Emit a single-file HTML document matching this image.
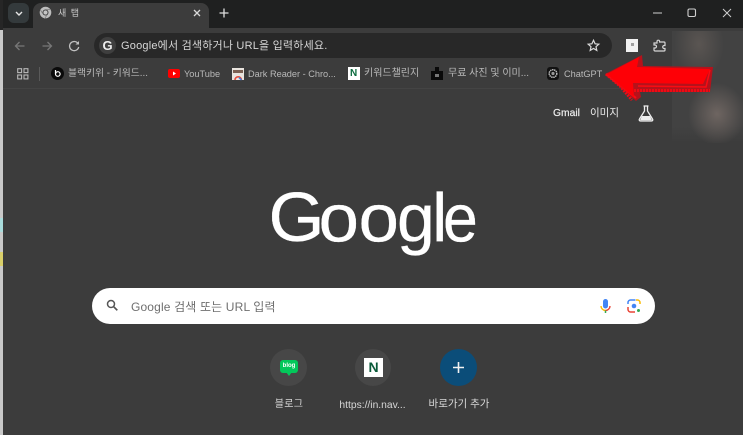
<!DOCTYPE html>
<html lang="ko"><head><meta charset="utf-8"><title>새 탭</title>
<style>
*{box-sizing:border-box}
html,body{margin:0;padding:0;width:743px;height:435px;overflow:hidden;background:#3b3b3b}
body{position:relative;font-family:"Liberation Sans","Noto Sans CJK KR",sans-serif}
.a{position:absolute;white-space:nowrap}
.bm{font-size:10px;color:#b9b9b9;top:68px;line-height:12px}
.lt{font-size:9.200px}
svg{position:absolute;overflow:visible}
</style></head><body>
<!-- frame -->
<div class="a" style="left:0;top:0;width:743px;height:28px;background:#1f2020"></div>
<div class="a" style="left:0;top:0;width:3px;height:435px;background:#c9c9c9"></div>
<div class="a" style="left:0;top:0;width:3px;height:30px;background:#262626"></div>
<div class="a" style="left:0;top:218px;width:3px;height:14px;background:#a9dcdc"></div>
<div class="a" style="left:0;top:252px;width:3px;height:14px;background:#d9cf6a"></div>
<div class="a" style="left:3px;top:28px;width:740px;height:407px;background:#3c3c3c;border-radius:6px 0 0 0"></div>
<!-- tab search button -->
<div class="a" style="left:8px;top:3px;width:21px;height:20px;background:#343a3c;border-radius:6px"></div>
<svg style="left:14px;top:9px" width="10" height="8"><path d="M2 3l3 3 3-3" fill="none" stroke="#e6e6e6" stroke-width="1.4"/></svg>
<!-- tab -->
<div class="a" style="left:33px;top:3px;width:176px;height:25px;background:#3c3c3c;border-radius:8px 8px 0 0"></div>
<svg style="left:39px;top:6px" width="13" height="13" viewBox="0 0 13 13"><circle cx="6.500" cy="6.500" r="5.800" fill="#bdbdbd"/><circle cx="6.500" cy="6.500" r="3" fill="#3c3c3c"/><circle cx="6.500" cy="6.500" r="2.100" fill="#c4c4c4"/><path d="M6.500 3.500h5.500M4 8l-2.500-4M8 9l-2.500 3.800" stroke="#7f7f7f" fill="none" stroke-width=".8"/></svg>
<div class="a" style="left:58px;top:7px;font-size:9px;line-height:13px;color:#c8c8c8;letter-spacing:1px">새 탭</div>
<svg style="left:193px;top:9px" width="8" height="8"><path d="M1 1l6 6M7 1l-6 6" stroke="#d8d8d8" stroke-width="1.300"/></svg>
<svg style="left:219px;top:8px" width="10" height="10"><path d="M5 .5v9M.5 5h9" stroke="#dedede" stroke-width="1.300"/></svg>
<!-- window controls -->
<svg style="left:653px;top:8px" width="10" height="10"><path d="M0 5h9" stroke="#cfcfcf"/></svg>
<svg style="left:687px;top:8px" width="10" height="10"><rect x="1" y="1" width="7.500" height="7.500" rx="1.500" fill="none" stroke="#cfcfcf" stroke-width="1.100"/></svg>
<svg style="left:722px;top:8px" width="10" height="10"><path d="M1 1l8 8M9 1l-8 8" stroke="#cfcfcf" stroke-width="1"/></svg>
<!-- nav -->
<svg style="left:14px;top:40px" width="12" height="12"><path d="M10.500 6H1.500M5.500 2L1.500 6l4 4" fill="none" stroke="#777" stroke-width="1.300"/></svg>
<svg style="left:41px;top:40px" width="12" height="12"><path d="M1.500 6h9M6.500 2l4 4-4 4" fill="none" stroke="#777" stroke-width="1.300"/></svg>
<svg style="left:68px;top:40px" width="12" height="12"><path d="M10 3.500A4.600 4.600 0 1 0 10.700 7" fill="none" stroke="#c0c0c0" stroke-width="1.300"/><path d="M7.500 4.500h3.500V1z" fill="#c0c0c0"/></svg>
<!-- omnibox -->
<div class="a" style="left:94px;top:33px;width:518px;height:25px;background:#282828;border-radius:13px"></div>
<div class="a" style="left:99px;top:37px;width:17px;height:17px;background:#3f3f3f;border-radius:50%"></div>
<div class="a" style="left:101px;top:38px;width:13px;font-size:13px;line-height:15px;font-weight:700;color:#eee;text-align:center">G</div>
<div class="a" style="left:121px;top:38.500px;font-size:11px;line-height:15px;color:#d6d6d6;letter-spacing:.2px">Google에서 검색하거나 URL을 입력하세요.</div>
<svg style="left:587px;top:39px" width="13" height="13" viewBox="0 0 13 13"><path d="M6.500 1.300l1.600 3.500 3.700.4-2.800 2.500.8 3.700-3.300-1.900-3.300 1.900.8-3.700L1.200 5.200l3.700-.4z" fill="none" stroke="#dcdcdc" stroke-width="1.200"/></svg>
<!-- extensions -->
<div class="a" style="left:626px;top:39px;width:12px;height:13px;background:#f2f2f2"></div>
<div class="a" style="left:631px;top:43px;width:3px;height:3px;background:#a0a0a0"></div>
<svg style="left:653px;top:39px" width="14" height="13" viewBox="0 0 14 13"><path d="M1 4h3V2.500a1.300 1.300 0 0 1 2.600 0V3.000h4.400a1 1 0 0 1 1 1v2.500h-.8a1.500 1.500 0 0 0 0 3h.8v1.500a1 1 0 0 1-1 1H2a1 1 0 0 1-1-1V9h1a1.500 1.500 0 0 0 0-3H1z" fill="none" stroke="#d6d6d6" stroke-width="1.200"/></svg>
<!-- bookmarks -->
<div class="a" style="left:3px;top:88px;width:670px;height:1px;background:#444"></div>
<svg style="left:17px;top:68px" width="12" height="12"><g fill="none" stroke="#b8b8b8" stroke-width="1.100"><rect x=".7" y=".7" width="3.900" height="3.900"/><rect x="7" y=".7" width="3.900" height="3.900"/><rect x=".7" y="7" width="3.900" height="3.900"/><rect x="7" y="7" width="3.900" height="3.900"/></g></svg>
<div class="a" style="left:39px;top:67px;width:1px;height:14px;background:#5a5a5a"></div>
<div class="a" style="left:51px;top:67px;width:13px;height:13px;background:#0a0a0a;border-radius:50%"></div>
<svg style="left:51px;top:67px" width="13" height="13"><circle cx="6.800" cy="7" r="2.300" fill="none" stroke="#fff" stroke-width="1.200"/><path d="M4.500 3v4" stroke="#fff" stroke-width="1.200"/></svg>
<div class="a bm" style="left:68px;font-size:9.800px">블랙키위 - 키워드...</div>
<div class="a" style="left:168px;top:69px;width:12px;height:9px;background:#f00;border-radius:2px"></div>
<svg style="left:168px;top:69px" width="12" height="9"><path d="M5 2.500v4l3-2z" fill="#fff"/></svg>
<div class="a bm lt" style="left:184px">YouTube</div>
<div class="a" style="left:232px;top:68px;width:12px;height:12px;background:#e9e4de"></div>
<svg style="left:232px;top:68px" width="12" height="12"><path d="M1 2h10v3H1z" fill="#7a5f52"/><path d="M3 12a3.200 3.200 0 0 1 6.400 0" fill="none" stroke="#e34b3c" stroke-width="1.600"/><path d="M7 9.500l2.500 2.500" stroke="#3b7de0" stroke-width="1.500"/></svg>
<div class="a bm lt" style="left:248px">Dark Reader - Chro...</div>
<div class="a" style="left:348px;top:67px;width:12px;height:13px;background:#fff"></div>
<div class="a" style="left:350px;top:68px;font-size:10px;line-height:11px;font-weight:700;color:#0b6b3e">N</div>
<div class="a bm" style="left:364px">키워드챌린지</div>
<div class="a" style="left:431px;top:71px;width:12px;height:9px;background:#0a0a0a"></div>
<div class="a" style="left:435px;top:67px;width:4px;height:4px;background:#0a0a0a"></div>
<div class="a" style="left:435px;top:74px;width:4px;height:3px;background:#777"></div>
<div class="a bm" style="left:448px">무료 사진 및 이미...</div>
<div class="a" style="left:547px;top:67px;width:12px;height:13px;background:#111;border-radius:3px"></div>
<svg style="left:547px;top:67px" width="12" height="13"><circle cx="6" cy="6.500" r="3.800" fill="none" stroke="#bbb" stroke-width="1.500" stroke-dasharray="1.500 .6"/><circle cx="6" cy="6.500" r="1.600" fill="#999"/></svg>
<div class="a bm lt" style="left:564px">ChatGPT</div>
<!-- blurred right side -->
<div class="a" style="left:672px;top:31px;width:71px;height:112px;background:linear-gradient(#424242 85%,#3c3c3c);overflow:hidden">
 <div class="a" style="left:2px;top:-22px;width:50px;height:70px;background:radial-gradient(closest-side,#5a5552,rgba(90,85,82,0))"></div>
 <div class="a" style="left:16px;top:52px;width:58px;height:62px;background:radial-gradient(closest-side,#6e6561,rgba(110,101,97,0))"></div>
</div>
<!-- arrow -->
<svg style="left:0;top:0" width="743" height="135">
 <path d="M605 74L642 55 643 66 713 67 710 92 640 92 641 97 636 101z" fill="#b5121b"/>
 <path d="M607 75L636 98" stroke="#fd0a12" stroke-width="2"/>
 <path d="M634 90.500L710 90.500" stroke="#f00a14" stroke-width="3" stroke-dasharray="2 1" fill="none"/>
 <path d="M606 74L620 86 632 100" stroke="#f00a14" stroke-width="3" stroke-dasharray="2 1" fill="none"/>
 <path d="M638 86L706 87 710 70" stroke="#fd0a12" stroke-width="1.500" fill="none"/>
 <path d="M607 74L639 57 637 67 710 69 703 84 633 83 634 97z" fill="#fe0006"/>
</svg>
<!-- top links -->
<div class="a" style="left:553px;top:107px;font-size:10.300px;line-height:14px;color:#ececec;-webkit-text-stroke:.2px #ececec">Gmail</div>
<div class="a" style="left:590px;top:106px;font-size:10.500px;line-height:14px;color:#ececec">이미지</div>
<svg style="left:638px;top:105px" width="16" height="17" viewBox="0 0 16 17"><path d="M5.500 1h5M6.500 1v5L1.500 14a1.200 1.200 0 0 0 1 2h11a1.200 1.200 0 0 0 1-2L9.500 6V1" fill="none" stroke="#eee" stroke-width="1.300"/><path d="M4 11h8l2 4.300H2z" fill="#eee"/></svg>
<!-- google logo -->
<svg style="left:0;top:0" width="743" height="435"><g font-family="Liberation Sans" fill="#fff" stroke="#fff" stroke-width=".3">
<text transform="translate(268.500 241) scale(1.030 1)" font-size="70">G</text>
<text transform="translate(318.500 241.500) scale(1.070 1)" font-size="68">o</text>
<text transform="translate(358.500 241.500) scale(1.070 1)" font-size="68">o</text>
<text transform="translate(397 241.500)" font-size="68">g</text>
<text transform="translate(432 241.500)" font-size="69">l</text>
<text transform="translate(443 241.500) scale(.920 1)" font-size="68">e</text>
</g></svg>
<!-- search box -->
<div class="a" style="left:92px;top:288px;width:563px;height:36px;background:#fff;border-radius:18px"></div>
<svg style="left:106px;top:299px" width="13" height="13"><circle cx="5" cy="5" r="3.500" fill="none" stroke="#555" stroke-width="1.500"/><path d="M7.800 7.800l3.500 3.500" stroke="#555" stroke-width="1.700"/></svg>
<div class="a" style="left:131px;top:299px;font-size:12px;line-height:16px;color:#6f6f6f;letter-spacing:.15px">Google 검색 또는 URL 입력</div>
<svg style="left:599px;top:298px" width="13" height="17" viewBox="0 0 13 17"><rect x="4" y="1" width="5" height="9.500" rx="2.500" fill="#4285f4"/><path d="M2 8a4.500 4.500 0 0 0 4.500 4.500" fill="none" stroke="#fbbc04" stroke-width="1.400"/><path d="M11 8a4.500 4.500 0 0 1-4.500 4.500" fill="none" stroke="#ea4335" stroke-width="1.400"/><path d="M6.500 12.500V15" stroke="#34a853" stroke-width="1.500"/></svg>
<svg style="left:627px;top:299px" width="14" height="14" viewBox="0 0 14 14" fill="none" stroke-width="1.500"><path d="M1 5V3.500A2.500 2.500 0 0 1 3.500 1H5" stroke="#4285f4"/><path d="M5 1h3.500" stroke="#4285f4"/><path d="M9 1h1.500A2.500 2.500 0 0 1 13 3.500V5" stroke="#fbbc04"/><path d="M1 8v2.500A2.500 2.500 0 0 0 3.500 13H8" stroke="#ea4335"/><circle cx="7" cy="7" r="2.300" fill="#4285f4" stroke="none"/><circle cx="11.500" cy="11.500" r="1.500" fill="#34a853" stroke="none"/></svg>
<!-- shortcuts -->
<div class="a" style="left:270px;top:349px;width:37px;height:37px;background:#474747;border-radius:50%"></div>
<div class="a" style="left:280px;top:360px;width:18px;height:13px;background:#03c75a;border-radius:3px"></div>
<div class="a" style="left:286px;top:372px;width:6px;height:4px;background:#03c75a;clip-path:polygon(0 0,100% 0,50% 100%)"></div>
<div class="a" style="left:280px;top:361px;width:18px;text-align:center;font-size:6px;line-height:10px;font-weight:700;color:#fff">blog</div>
<div class="a" style="left:355px;top:349px;width:36px;height:37px;background:#474747;border-radius:50%"></div>
<div class="a" style="left:364px;top:358px;width:19px;height:19px;background:#fff"></div>
<div class="a" style="left:364px;top:358px;width:19px;text-align:center;font-size:14px;line-height:19px;font-weight:700;color:#0b5b3a">N</div>
<div class="a" style="left:440px;top:349px;width:37px;height:37px;background:#0b4d79;border-radius:50%"></div>
<svg style="left:452px;top:361px" width="13" height="13"><path d="M6.500 1v11M1 6.500h11" stroke="#f2f2f2" stroke-width="1.600"/></svg>
<div class="a" style="left:250px;top:398px;width:78px;text-align:center;font-size:10px;line-height:14px;color:#d8d8d8;letter-spacing:.3px">블로그</div>
<div class="a" style="left:330px;top:398.500px;width:85px;text-align:center;font-size:10.300px;line-height:14px;color:#d8d8d8">https://in.nav...</div>
<div class="a" style="left:418px;top:397px;width:82px;text-align:center;font-size:10.500px;line-height:14px;color:#d8d8d8">바로가기 추가</div>
</body></html>
